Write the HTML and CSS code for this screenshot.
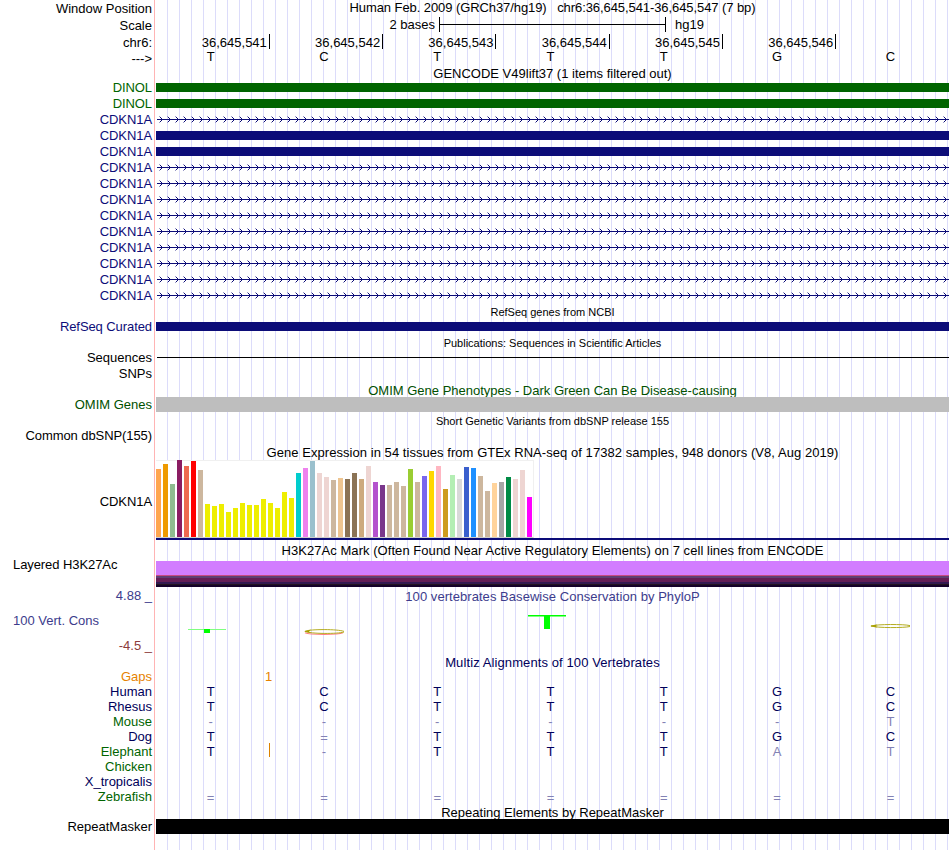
FILE: index.html
```
<!DOCTYPE html>
<html lang="en">
<head>
	<meta charset="utf-8">
	<title>Human chr6:36,645,541-36,645,547</title>
	<link rel="stylesheet" href="styles.css">
</head>
<body>
	<div class="browser">
		<div class="row header">
			<div class="label low">Window Position</div>
			<div class="title tight">Human Feb. 2009 (GRCh37/hg19)&nbsp;&nbsp; chr6:36,645,541-36,645,547 (7 bp)</div>
		</div>
		<div class="row header">
			<div class="label low">Scale</div>
			<div class="track scale">
				<span>2 bases</span>
				<div class="scaleBar"></div>
				<span>hg19</span>
			</div>
		</div>
		<div class="row header">
			<div class="label low">chr6:</div>
			<div class="track ruler" id="ruler"></div>
		</div>
		<div class="row species">
			<div class="label">---&gt;</div>
			<div class="track bases top" data-seq="TCTTTGC"></div>
		</div>
		<div class="row gencodeTitle"><div class="label"></div><div class="title">GENCODE V49lift37 (1 items filtered out)</div></div>
		<div id="genes"></div>

		<div class="row head"><div class="label"></div><div class="title low small">RefSeq genes from NCBI</div></div>
		<div class="row gene"><div class="label navy tight">RefSeq Curated</div><div class="track"><div class="exon navyBg"></div></div></div>

		<div class="row head"><div class="label"></div><div class="title low small">Publications: Sequences in Scientific Articles</div></div>
		<div class="row gene"><div class="label">Sequences</div><div class="track"><div class="line"></div></div></div>
		<div class="row gene"><div class="label">SNPs</div><div class="track"></div></div>

		<div class="row head"><div class="label"></div><div class="title low darkGreen">OMIM Gene Phenotypes - Dark Green Can Be Disease-causing</div></div>
		<div class="row gene"><div class="label darkGreen">OMIM Genes</div><div class="track"><div class="block grayBg"></div></div></div>

		<div class="row head"><div class="label"></div><div class="title low small">Short Genetic Variants from dbSNP release 155</div></div>
		<div class="row gene"><div class="label tight">Common dbSNP(155)</div><div class="track"></div></div>

		<div class="row gene"><div class="label"></div><div class="title low wide">Gene Expression in 54 tissues from GTEx RNA-seq of 17382 samples, 948 donors (V8, Aug 2019)</div></div>
		<div class="row gtex">
			<div class="label tight">CDKN1A</div>
			<div class="track">
				<div class="chart" id="chart"></div>
				<div class="geneLine"></div>
			</div>
		</div>

		<div class="row head"><div class="label"></div><div class="title low wide">H3K27Ac Mark (Often Found Near Active Regulatory Elements) on 7 cell lines from ENCODE</div></div>
		<div class="row h3k">
			<div class="label left tight">Layered H3K27Ac</div>
			<div class="track"><div class="signal"></div></div>
		</div>

		<div class="row cons">
			<div class="consLabels">
				<div class="label blue">4.88 _</div>
				<div class="label left blue">100 Vert. Cons</div>
				<div class="label maroon">-4.5 _</div>
			</div>
			<div class="consBody">
				<div class="title low wide blue">100 vertebrates Basewise Conservation by PhyloP</div>
				<svg class="logo" width="793" height="40" viewBox="156 604 793 40">
					<rect x="188" y="629" width="38" height="1" fill="#80ff80"/>
					<rect x="204" y="629" width="6" height="4" fill="#00ff00"/>
					<path d="M343 632.8C338 634.9 310 634.9 305 632.8" fill="none" stroke="#ff8080" stroke-width="1.2"/>
					<path d="M344 631.4C338 629 310 629 305 631.3C310 634 338 634 344 632" fill="none" stroke="#b4ac20" stroke-width="1"/>
					<path d="M304 631.4L311 629.6L309 631.4L311 633Z" fill="#a8a000"/>
					<rect x="528" y="615" width="38" height="1" fill="#00ff00"/>
					<rect x="528" y="616" width="38" height="1" fill="#80ff80"/>
					<rect x="544" y="615" width="6" height="14" fill="#00ff00"/>
					<path d="M910 625.6C904 624.1 877 624.1 871 626C877 628 904 628 910 626.5" fill="none" stroke="#b4ac20" stroke-width="1"/>
					<path d="M870 626L877 624.5L876 626L877 627.4Z" fill="#a8a000"/>
				</svg>
			</div>
		</div>

		<div class="row head"><div class="label"></div><div class="title low wider deepNavy">Multiz Alignments of 100 Vertebrates</div></div>
		<div class="row species"><div class="label orange">Gaps</div><div class="track gaps orange">1</div></div>
		<div class="row species"><div class="label deepNavy">Human</div><div class="track bases" data-seq="TCTTTGC"></div></div>
		<div class="row species"><div class="label deepNavy">Rhesus</div><div class="track bases" data-seq="TCTTTGC"></div></div>
		<div class="row species"><div class="label green">Mouse</div><div class="track bases" data-seq="------t"></div></div>
		<div class="row species"><div class="label deepNavy">Dog</div><div class="track bases" data-seq="T=TTTGC"></div></div>
		<div class="row species"><div class="label green">Elephant</div><div class="track bases insert" data-seq="T-TTTat"></div></div>
		<div class="row species"><div class="label green">Chicken</div><div class="track"></div></div>
		<div class="row species"><div class="label deepNavy">X_tropicalis</div><div class="track"></div></div>
		<div class="row species"><div class="label green">Zebrafish</div><div class="track bases" data-seq="======="></div></div>

		<div class="row head"><div class="label"></div><div class="title low">Repeating Elements by RepeatMasker</div></div>
		<div class="row species"><div class="label">RepeatMasker</div><div class="track"><div class="block blackBg"></div></div></div>
	</div>

	<script>
		// coordinate ruler, the last base has no tick
		var str = "";
		for(var i=1;i<=6;i++){
			str += `<span>36,645,54${i}</span>`;
		}
		document.getElementById("ruler").innerHTML = str;

		// bases, lower case = differs from human
		var rows = document.querySelectorAll(".bases");
		for(var i=0;i<rows.length;i++){
			var seq = rows[i].getAttribute("data-seq");
			str = "";
			for(var j=0;j<seq.length;j++){
				var c = seq[j];
				var cls = "";
				if(c !== c.toUpperCase() || c === "-" || c === "="){
					cls = "dim";
				}
				if(c === "="){
					cls += " double";
				}
				str += `<span class="${cls}">${c.toUpperCase()}</span>`;
			}
			rows[i].innerHTML = str;
		}

		// transcripts: G = noncoding exon, E = exon, I = intron
		var arrows = "";
		var tails = "";
		for(var x=3;x<793;x+=8){
			tails += `M${x} 4.5h1M${x} 10.5h1`;
			arrows += `M${x+1} 5.5h1M${x+1} 9.5h1M${x+2} 6.5h1M${x+2} 8.5h1`;
		}
		var genes = "GGIEEIIIIIIIII";
		str = "";
		for(var i=0;i<genes.length;i++){
			var g = genes[i];
			var body = `<div class="exon ${g === "G" ? "greenBg" : "navyBg"}"></div>`;
			if(g === "I"){
				body = `<svg class="intron" width="793" height="16"><path d="M1 7.5H793"/><path d="${arrows}"/><path class="tails" d="${tails}"/></svg>`;
			}
			str += `<div class="row gene">
						<div class="label tight ${g === "G" ? "green" : "navy"}">${g === "G" ? "DINOL" : "CDKN1A"}</div>
						<div class="track">${body}</div>
					</div>`;
		}
		document.getElementById("genes").innerHTML = str;

		// GTEx median expression, one [height, colour] for each tissue
		var tissues = [
			[68,"#ffa54f"],[73,"#ee9a00"],[53,"#8fbc8f"],[77,"#8b1c62"],[71,"#ee6a50"],[76,"#ff0000"],[67,"#cdb79e"],
			[33,"#eeee00"],[31,"#eeee00"],[33,"#eeee00"],[25,"#eeee00"],[29,"#eeee00"],[34,"#eeee00"],[32,"#eeee00"],
			[32,"#eeee00"],[38,"#eeee00"],[34,"#eeee00"],[29,"#eeee00"],[45,"#eeee00"],[39,"#eeee00"],
			[64,"#00cdcd"],[69,"#ee82ee"],[76,"#9ac0cd"],[64,"#eed5d2"],[60,"#eed5d2"],[57,"#cdb79e"],[59,"#eec591"],
			[58,"#8b7355"],[64,"#8b7355"],[58,"#cdaa7d"],[71,"#eed5d2"],[55,"#b452cd"],[52,"#7a378b"],
			[52,"#cdb79e"],[55,"#cdb79e"],[51,"#cdb79e"],[68,"#9acd32"],[55,"#cdb79e"],[61,"#7a67ee"],[66,"#ffd700"],
			[71,"#ffb6c1"],[48,"#cd9b1d"],[62,"#b4eeb4"],[58,"#d9d9d9"],[70,"#3a5fcd"],[69,"#1e90ff"],[61,"#cdb79e"],
			[46,"#cdb79e"],[54,"#ffd39b"],[55,"#a6a6a6"],[60,"#008b45"],[58,"#eed5d2"],[67,"#eed5d2"],[40,"#ff00ff"]
		];
		str = "";
		for(var i=0;i<tissues.length;i++){
			str += `<div class="bar" style="height:${tissues[i][0]}px;background:${tissues[i][1]}"></div>`;
		}
		document.getElementById("chart").innerHTML = str;
	</script>
</body>
</html>
```
FILE: styles.css
```
body{
	margin: 0;
	background: #fff;
	font: 13px/15px "Liberation Sans", Arial, sans-serif;
	color: #000;
}
.browser{
	width: 949px;
	height: 850px;
	overflow: hidden;
	/* red edge, white label column, then a guide line every 12px */
	background:
		linear-gradient(#ffb4b4, #ffb4b4) 154px 0 / 1px 100% no-repeat,
		linear-gradient(#fff, #fff) 0 0 / 156px 100% no-repeat,
		linear-gradient(90deg, #dcdcfa 1px, transparent 1px) 167px 0 / 12px 100%;
}
.row{
	display: flex;
	white-space: nowrap;
}
.header{
	height: 17px;
}
.gencodeTitle{
	height: 14px;
}
.head, .species{
	height: 15px;
}
.gene{
	height: 16px;
}
.label{
	flex: none;
	box-sizing: border-box;
	width: 156px;
	padding-right: 4px;
	text-align: right;
}
.left{
	padding-left: 13px;
	text-align: left;
}
.title, .track{
	width: 793px;
}
.title{
	text-align: center;
}
.low{
	padding-top: 1px;
}
.small{
	font-size: 11px;
}
.tight{ letter-spacing: -0.08px; }
.wide{ letter-spacing: 0.05px; }
.wider{ letter-spacing: 0.1px; }

/* scale and ruler */
.scale{
	display: flex;
}
.scale span:first-child{
	width: 279px;
	margin-right: 4px;
	text-align: right;
}
.scaleBar{
	box-sizing: border-box;
	width: 227px;
	height: 15px;
	margin-right: 9px;
	border: solid #000;
	border-width: 0 1px;
	background: linear-gradient(#000, #000) 0 7px / 100% 1px no-repeat;
}
.ruler{
	display: grid;
	grid-template-columns: repeat(7, 113.3px);
	padding-left: 0.55px;
}
.ruler span{
	height: 14px;
	padding: 1px 2px 0 0;
	border-right: 1px solid #000;
	line-height: 15px;
	text-align: right;
}

/* bases and alignments */
.bases{
	display: grid;
	grid-template-columns: repeat(7, 113.3px);
	margin-left: -2px;
	color: #00005a;
	text-align: center;
}
.bases.top{
	margin-top: -2px;
	color: #000;
}
.dim{
	color: #8282b4;
}
.double{
	padding-top: 1px;
}
.insert span:first-child{
	position: relative;
}
.insert span:first-child::after{
	content: "";
	position: absolute;
	left: 115px;
	top: -1px;
	width: 1px;
	height: 14px;
	background: #dc8200;
}
.gaps{
	box-sizing: border-box;
	padding-left: 109px;
}

/* item shapes */
.exon{
	height: 9px;
	margin-top: 3px;
}
.line{
	height: 1px;
	margin: 7px 0 0 1px;
	background: #000;
}
.block{
	height: 15px;
}
.intron{
	display: block;
	stroke: #0c0c78;
	fill: none;
	shape-rendering: crispEdges;
}
.tails{
	stroke: #9a9ac8;
}

.gtex{
	height: 82px;
}
.gtex .label{
	padding-top: 34px;
}
.chart{
	box-sizing: border-box;
	display: flex;
	align-items: flex-end;
	gap: 2px;
	width: 378px;
	height: 78px;
	border: solid #f0f0f0;
	border-width: 1px 1px 0 0;
	border-bottom: 1px solid #ccc;
	background: #fff;
}
.bar{
	flex: none;
	width: 5px;
}
.geneLine{
	height: 2px;
	background: #0c0c78;
}

.h3k{
	height: 31px;
}
.signal{
	height: 26px;
	margin-top: 4px;
	background: linear-gradient(#d27dff 14px, #c84b82 14px 15px, #5f4073 15px 17px, #641e55 17px 21px, #321950 21px 23px, #23141e 23px 24px, #140028 24px);
}

.cons{
	height: 66px;
}
.consLabels{
	display: flex;
	flex-direction: column;
	gap: 10px;
	width: 156px;
}
.consBody .title{
	height: 15px;
}
.logo{
	display: block;
}

.navy{ color: #0c0c78; }
.deepNavy{ color: #00005a; }
.blue{ color: #3c3c8c; }
.green{ color: #006400; }
.darkGreen{ color: #005000; }
.maroon{ color: #8c3c3c; }
.orange{ color: #e68200; }
.navyBg{ background: #0c0c78; }
.greenBg{ background: #006400; }
.grayBg{ background: #bebebe; }
.blackBg{ background: #000; }
```
